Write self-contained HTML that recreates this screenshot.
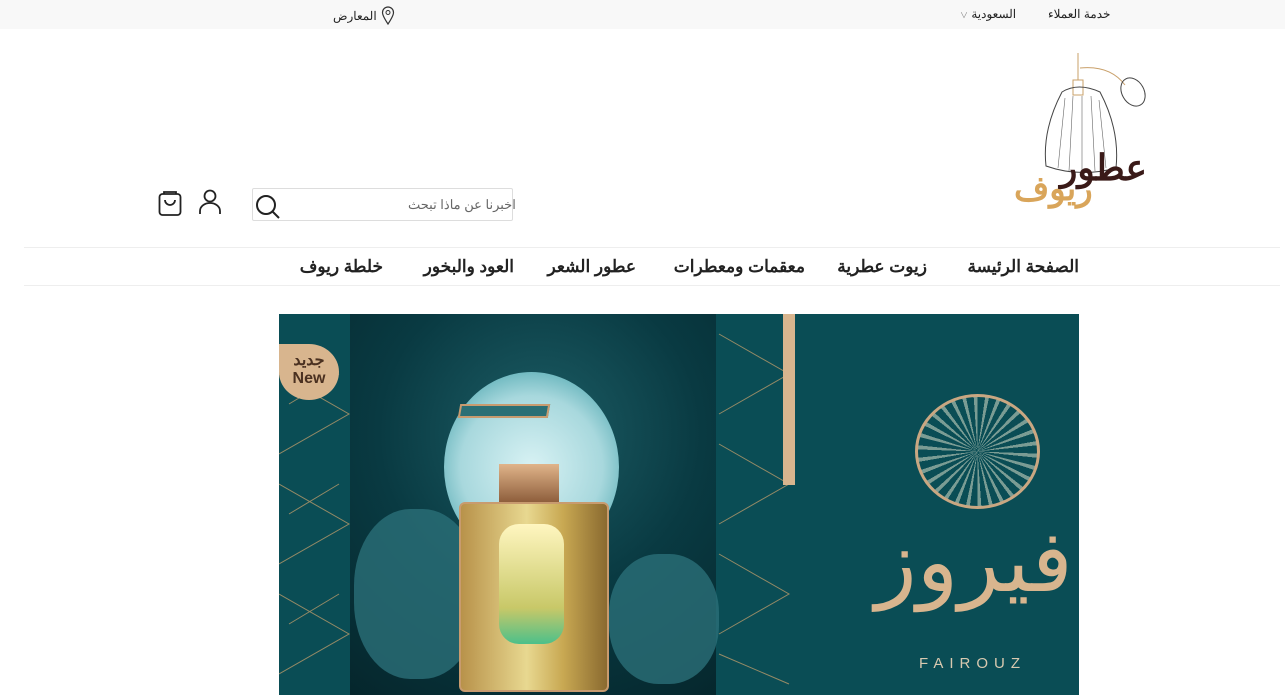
<!DOCTYPE html>
<html lang="ar" dir="rtl"><head><meta charset="utf-8">
<style>
*{margin:0;padding:0;box-sizing:border-box}
body{width:1285px;height:695px;overflow:hidden;background:#fff;font-family:"Liberation Sans","Noto Sans CJK SC",sans-serif;position:relative;color:#222}
.abs{position:absolute}
.top{left:0;top:0;width:1285px;height:29px;background:#f8f8f8}
.nav{left:24px;top:247px;width:1256px;height:39px;border-top:1px solid #eee;border-bottom:1px solid #eee}
.nav span{position:absolute;top:9px;font-size:17px;font-weight:600;color:#222;white-space:nowrap}
</style></head><body>
<div class="abs top"></div>
<div class="abs" style="left:1048px;top:7px;font-size:12px">خدمة العملاء</div>
<div class="abs" style="left:960px;top:7px;font-size:12px">السعودية <span style="font-size:8px;color:#888">∨</span></div>
<div class="abs" style="left:333px;top:9px;font-size:12px">المعارض</div>
<svg class="abs" style="left:381px;top:6px" width="14" height="19" viewBox="0 0 14 19"><path d="M7 18C3 12 1.5 9 1.5 6.5a5.5 5.5 0 0111 0C12.5 9 11 12 7 18z" fill="none" stroke="#333" stroke-width="1.2"/><circle cx="7" cy="6.5" r="2" fill="none" stroke="#333"/></svg>

<!-- logo -->
<svg class="abs" style="left:1040px;top:50px" width="110" height="125" viewBox="0 0 110 125">
<path d="M38 3v27M33 30h10v15h-10z" stroke="#c9a06a" fill="none"/>
<path d="M40 18 Q70 15 85 35" stroke="#c9a06a" fill="none"/>
<ellipse cx="93" cy="42" rx="11" ry="15" transform="rotate(-30 93 42)" fill="none" stroke="#444"/>
<path d="M22 42 Q38 32 60 42 Q80 80 76 118 Q40 128 6 116 Q2 80 22 42z" fill="none" stroke="#444"/>
<path d="M25 48 L18 118 M33 46 L29 121 M42 46 L42 122 M51 46 L55 121 M59 50 L66 118" stroke="#666" stroke-width=".6"/>
</svg>
<div class="abs" style="left:1060px;top:150px;font-size:36px;font-weight:bold;color:#3a1a18;line-height:1">عطور</div>
<div class="abs" style="left:1014px;top:172px;font-size:34px;font-weight:bold;color:#d9a55a;line-height:1">ريوف</div>

<!-- search -->
<div class="abs" style="left:252px;top:188px;width:261px;height:33px;border:1px solid #ddd;border-radius:2px"></div>
<div class="abs" style="left:408px;top:197px;font-size:13px;color:#666">اخبرنا عن ماذا تبحث</div>
<svg class="abs" style="left:254px;top:193px" width="28" height="28" viewBox="0 0 28 28"><circle cx="12" cy="12" r="9" fill="none" stroke="#222" stroke-width="2"/><path d="M18.5 18.5L25 25" stroke="#222" stroke-width="2"/></svg>
<svg class="abs" style="left:197px;top:188px" width="26" height="28" viewBox="0 0 26 28"><circle cx="13" cy="8" r="5.5" fill="none" stroke="#222" stroke-width="1.8"/><path d="M3 26v-3a10 8 0 0120 0v3" fill="none" stroke="#222" stroke-width="1.8"/></svg>
<svg class="abs" style="left:157px;top:189px" width="26" height="28" viewBox="0 0 26 28"><rect x="2.5" y="5" width="21" height="21" rx="3" fill="none" stroke="#222" stroke-width="1.8"/><path d="M7 5V3h12v2M8 11a5 5 0 0010 0" fill="none" stroke="#222" stroke-width="1.8"/></svg>

<div class="abs nav">
<span style="right:201px">الصفحة الرئيسة</span>
<span style="right:353px">زيوت عطرية</span>
<span style="right:475px">معقمات ومعطرات</span>
<span style="right:644px">عطور الشعر</span>
<span style="right:766px">العود والبخور</span>
<span style="right:897px">خلطة ريوف</span>
</div>

<!-- banner -->
<div class="abs" style="left:279px;top:314px;width:800px;height:381px;background:#0a4d55;overflow:hidden">
<svg class="abs" style="left:0;top:0" width="520" height="381"><g stroke="#b89a6a" stroke-width="1" fill="none" opacity=".8">
<path d="M0 60L70 100L0 140M0 170L70 210L0 250M0 280L70 320L0 360M10 90L60 60M10 200L60 170M10 310L60 280"/>
<path d="M440 20L510 60L440 100M440 130L510 170L440 210M440 240L510 280L440 320M440 340L510 370"/>
</g></svg>
<div class="abs" style="left:71px;top:0;width:366px;height:381px;background:radial-gradient(circle at 190px 120px,#1d5e66 0,#093a42 50%,#05262c 100%)"></div>
<div class="abs" style="left:165px;top:58px;width:175px;height:190px;border-radius:50%;background:radial-gradient(circle,#d8f2f4 0,#a8d8dd 55%,#5fb0b8 80%,rgba(60,160,170,0) 100%)"></div>
<div class="abs" style="left:75px;top:195px;width:125px;height:170px;border-radius:45%;background:#2b6f78;opacity:.8"></div>
<div class="abs" style="left:330px;top:240px;width:110px;height:130px;border-radius:45%;background:#2b6f78;opacity:.8"></div>
<div class="abs" style="left:180px;top:90px;width:90px;height:14px;background:#2a6f75;border:2px solid #c89b6f;transform:skewX(-10deg)"></div>
<div class="abs" style="left:220px;top:150px;width:60px;height:40px;background:linear-gradient(#e0b48a,#8a5a38)"></div>
<div class="abs" style="left:180px;top:188px;width:150px;height:190px;background:linear-gradient(90deg,#b8924a,#e8d890 45%,#c8a852 70%,#8a6a30);border:2px solid #c89b6f;border-radius:6px"></div>
<div class="abs" style="left:220px;top:210px;width:65px;height:120px;border-radius:20px;background:linear-gradient(#fff6c0,#c8c868 70%,#4cc08a)"></div>
<div class="abs" style="left:0;top:30px;width:60px;height:56px;background:#d8b58e;border-radius:0 50% 50% 50%;font-weight:bold;color:#4a3020;font-size:16px;text-align:center;line-height:18px;padding-top:8px;font-family:'Liberation Sans',sans-serif">جديد<br>New</div>
<div class="abs" style="left:504px;top:0;width:12px;height:171px;background:#d8b58e"></div>
<div class="abs" style="left:636px;top:80px;width:125px;height:115px;border-radius:50%;border:3px solid #c9a782;background:repeating-conic-gradient(#0a4d55 0 8deg,#7a9c94 8deg 12deg)"></div>
<div class="abs" style="left:590px;top:205px;width:210px;font-size:86px;color:#d8b58e;text-align:center;font-family:'DejaVu Sans',sans-serif;line-height:1">فيروز</div>
<div class="abs" style="left:640px;top:341px;font-size:15px;letter-spacing:6px;color:#d8c9b0;direction:ltr">FAIROUZ</div>
</div>
</body></html>
